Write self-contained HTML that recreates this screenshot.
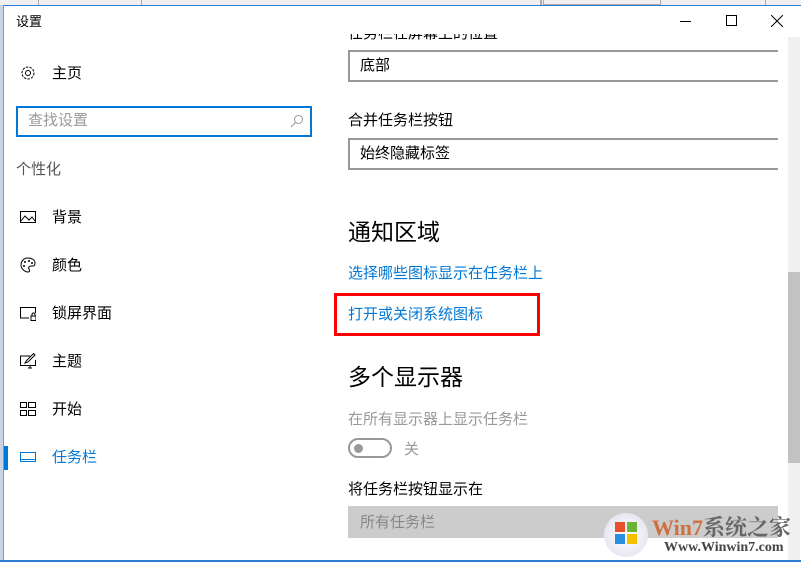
<!DOCTYPE html>
<html><head><meta charset="utf-8"><style>
*{margin:0;padding:0;box-sizing:border-box}
body{width:801px;height:562px;overflow:hidden;background:#fff;position:relative;font-family:"Liberation Sans","Noto Sans CJK SC",sans-serif;color:#000}
.a{position:absolute;white-space:nowrap}
.t{font-size:15px}
.ic{position:absolute;left:20px;width:16px;height:16px}
</style></head><body>
<div class="a" style="left:0;top:0;width:801px;height:5px;background:#f0f0f0"></div>
<div class="a" style="left:38px;top:0;width:104px;height:5px;border-left:1px solid #aaa;border-right:1px solid #aaa"></div>
<div class="a" style="left:540px;top:0;width:2px;height:5px;background:#aaa"></div>
<div class="a" style="left:543px;top:0;width:118px;height:5px;border:1px solid #aaa;border-top:0"></div>
<div class="a" style="left:765px;top:0;width:1px;height:5px;background:#aaa"></div>
<div class="a" style="left:0;top:5px;width:801px;height:1px;background:#2b7cd3"></div>
<div class="a" style="left:3px;top:5px;width:1px;height:557px;background:#7a9cc2"></div>
<div class="a" style="left:0;top:5px;width:3px;height:557px;background:#c8d4e4"></div>
<div class="a" style="left:0;top:560px;width:801px;height:2px;background:#2b7cd3"></div>

<div class="a" style="left:16px;top:11px;font-size:13px">设置</div>
<div class="a" style="left:680px;top:21px;width:11px;height:1px;background:#000"></div>
<div class="a" style="left:726px;top:15px;width:11px;height:11px;border:1px solid #000"></div>
<svg class="a" style="left:771px;top:15px" width="12" height="12"><path d="M0 0L12 12M12 0L0 12" stroke="#000" stroke-width="1"/></svg>

<svg class="ic" style="top:65px" viewBox="0 0 16 16"><circle cx="8" cy="8" r="2.5" fill="none" stroke="#000"/><circle cx="8" cy="8" r="6" fill="none" stroke="#000" stroke-dasharray="2.5 1.2"/></svg>
<div class="a t" style="left:52px;top:62px">主页</div>
<div class="a" style="left:16px;top:106px;width:296px;height:31px;border:2px solid #0078d7"></div>
<div class="a t" style="left:28px;top:109px;color:#999">查找设置</div>
<svg class="a" style="left:290px;top:114px" width="14" height="14"><circle cx="8.5" cy="5.5" r="4" fill="none" stroke="#999"/><path d="M5.5 8.5L1 13" stroke="#999"/></svg>
<div class="a t" style="left:16px;top:158px;color:#555">个性化</div>

<svg class="ic" style="top:209px" viewBox="0 0 16 16"><rect x="0.5" y="2.5" width="15" height="11" fill="none" stroke="#000"/><path d="M1 12L5 7L9 11L12 8L15 12" fill="none" stroke="#000"/></svg>
<div class="a t" style="left:52px;top:206px">背景</div>
<svg class="ic" style="top:257px" viewBox="0 0 16 16"><path d="M8 1C3 1 1 5 1 8c0 4 4 7 7 7 2 0 2-2 1-3s0-3 2-3h2c2 0 2-2 2-3 0-3-3-5-7-5z" fill="none" stroke="#000"/><circle cx="5" cy="5" r="1"/><circle cx="9" cy="4" r="1"/><circle cx="4" cy="9" r="1"/><circle cx="12" cy="6" r="1"/></svg>
<div class="a t" style="left:52px;top:254px">颜色</div>
<svg class="ic" style="top:305px" viewBox="0 0 16 16"><path d="M9 13H0.5V2.5H15.5V8" fill="none" stroke="#000"/><rect x="11" y="11" width="5" height="4.5" fill="none" stroke="#000"/><path d="M12 11V9.5a1.5 1.5 0 0 1 3 0V11" fill="none" stroke="#000"/></svg>
<div class="a t" style="left:52px;top:302px">锁屏界面</div>
<svg class="ic" style="top:353px" viewBox="0 0 16 16"><path d="M10 3H0.5V12.5H15.5V7" fill="none" stroke="#000"/><path d="M8 15h4M10 12.5V15M5 10l3-1 7-7-1.5-1.5-7 7z" fill="none" stroke="#000"/></svg>
<div class="a t" style="left:52px;top:350px">主题</div>
<svg class="ic" style="top:401px" viewBox="0 0 16 16"><rect x="0.5" y="1.5" width="6" height="5" fill="none" stroke="#000"/><rect x="8.5" y="1.5" width="7" height="5" fill="none" stroke="#000"/><rect x="0.5" y="9.5" width="6" height="5" fill="none" stroke="#000"/><rect x="8.5" y="9.5" width="7" height="5" fill="none" stroke="#000"/></svg>
<div class="a t" style="left:52px;top:398px">开始</div>
<div class="a" style="left:4px;top:446px;width:4px;height:24px;background:#0078d7"></div>
<svg class="ic" style="top:449px" viewBox="0 0 16 16"><rect x="0.5" y="3.5" width="15" height="9" fill="none" stroke="#0078d7"/><path d="M0.5 10.5H15.5" stroke="#0078d7"/></svg>
<div class="a t" style="left:52px;top:446px;color:#0078d7">任务栏</div>

<div class="a t" style="left:348px;top:34px;height:7px;overflow:hidden"><div style="margin-top:-12px">任务栏在屏幕上的位置</div></div>
<div class="a" style="left:348px;top:50px;width:430px;height:32px;border:2px solid #999;border-right:0"></div>
<div class="a t" style="left:360px;top:54px">底部</div>
<div class="a t" style="left:348px;top:109px">合并任务栏按钮</div>
<div class="a" style="left:348px;top:138px;width:430px;height:32px;border:2px solid #999;border-right:0"></div>
<div class="a t" style="left:360px;top:142px">始终隐藏标签</div>
<div class="a" style="left:348px;top:213px;font-size:23px">通知区域</div>
<div class="a t" style="left:348px;top:262px;color:#0078d7">选择哪些图标显示在任务栏上</div>
<div class="a t" style="left:348px;top:303px;color:#0078d7">打开或关闭系统图标</div>
<div class="a" style="left:334px;top:293px;width:206px;height:43px;border:3px solid #f00"></div>
<div class="a" style="left:348px;top:358px;font-size:23px">多个显示器</div>
<div class="a t" style="left:348px;top:408px;color:#999">在所有显示器上显示任务栏</div>
<div class="a" style="left:348px;top:438px;width:44px;height:20px;border:2px solid #999;border-radius:10px"></div>
<div class="a" style="left:354px;top:444px;width:9px;height:9px;border-radius:50%;background:#999"></div>
<div class="a t" style="left:404px;top:438px;color:#999">关</div>
<div class="a t" style="left:348px;top:478px">将任务栏按钮显示在</div>
<div class="a" style="left:348px;top:506px;width:430px;height:32px;background:#ccc"></div>
<div class="a t" style="left:360px;top:511px;color:#888">所有任务栏</div>

<div class="a" style="left:788px;top:37px;width:12px;height:523px;background:#f0f0f0"></div>
<div class="a" style="left:788px;top:272px;width:12px;height:191px;background:#c2c2c2"></div>

<div class="a" style="left:604px;top:513px;width:44px;height:44px;border-radius:50%;background:radial-gradient(#fff,#dde)"></div>
<div class="a" style="left:615px;top:522px;width:10px;height:10px;background:#e8502a"></div>
<div class="a" style="left:627px;top:522px;width:10px;height:10px;background:#6bb434"></div>
<div class="a" style="left:615px;top:534px;width:10px;height:10px;background:#2b8fe0"></div>
<div class="a" style="left:627px;top:534px;width:10px;height:10px;background:#f5c000"></div>
<div class="a" style="left:652px;top:511px;font-size:22px;font-weight:bold;font-family:'Liberation Serif','Noto Serif CJK SC',serif;color:#d07040">Win7<span style="color:#666">系统之家</span></div>
<div class="a" style="left:664px;top:540px;font-size:14px;font-weight:bold;font-family:'Liberation Serif',serif;color:#444">Www.Winwin7.com</div>
</body></html>
